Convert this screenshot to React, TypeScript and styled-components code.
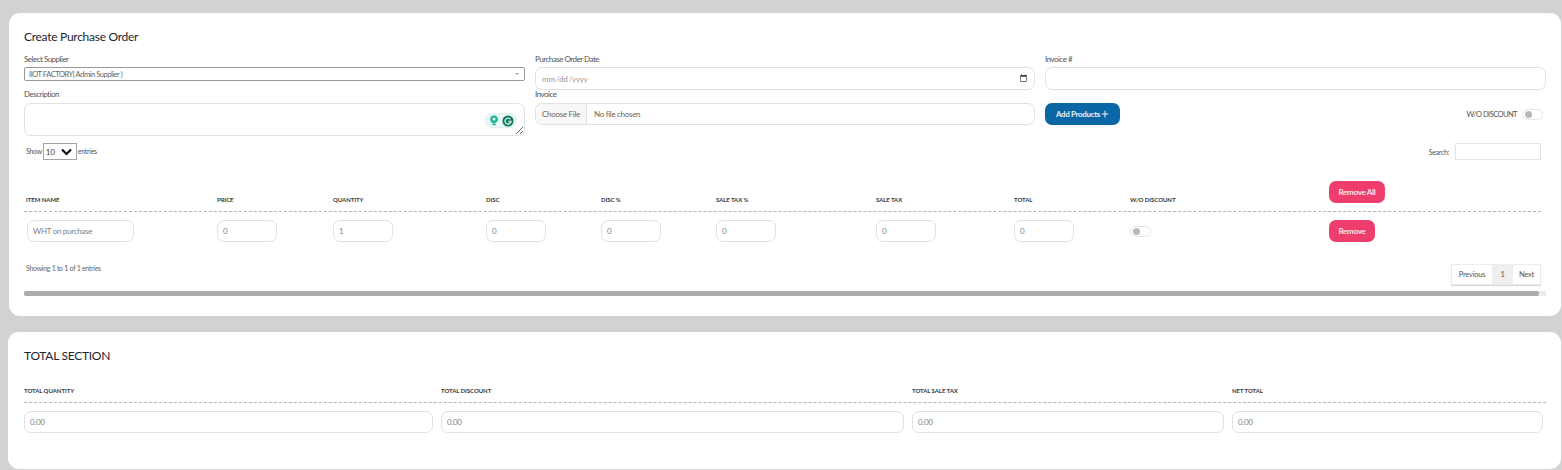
import React from "react";
import styled, { createGlobalStyle } from "styled-components";
import { Plus } from "lucide-react";

const GlobalStyle = createGlobalStyle`
  html, body {
    margin: 0;
    padding: 0;
    background: #d2d2d2;
    font-family: Lato, "Open Sans", sans-serif;
    color: #3a3a3a;
  }
  * { box-sizing: border-box; }
`;

const Page = styled.div`
  width: 1562px;
  height: 470px;
  padding-top: 13px;
  overflow: hidden;
`;

const Card = styled.section<{ $left: number }>`
  margin: 0 1px 0 ${(p) => p.$left}px;
  background: #fff;
  border-radius: 11px;
  padding: 16px 15px 20px ${(p) => 24 - p.$left}px;
  & + & {
    margin-top: 16px;
    padding-bottom: 35px;
  }
`;

const Title = styled.h4`
  margin: 0;
  font-size: 12px;
  line-height: 16px;
  font-weight: 400;
  letter-spacing: -0.28px;
  color: #1f2530;
`;

const FormGrid = styled.div`
  margin-top: 9px;
  display: grid;
  grid-template-columns: 501px 500px 501px;
  column-gap: 10px;
`;

const Field = styled.div`
  display: flex;
  flex-direction: column;
`;

const Label = styled.label<{ $height: number }>`
  height: ${(p) => p.$height}px;
  font-size: 8px;
  line-height: 10px;
  letter-spacing: -0.5px;
  color: #555;
`;

const FieldBody = styled.div<{ $height: number }>`
  height: ${(p) => p.$height}px;
  display: flex;
  align-items: flex-start;
  justify-content: space-between;
  position: relative;
`;

const SupplierSelect = styled.select`
  width: 100%;
  height: 14px;
  padding: 0 0 0 4px;
  border: 1px solid #999;
  border-radius: 2px;
  background: #fff;
  font-family: inherit;
  font-size: 7.5px;
  letter-spacing: -0.45px;
  color: #666;
  appearance: none;
  outline: none;
`;

const SelectCaret = styled.span`
  position: absolute;
  right: 6px;
  top: 6px;
  border-left: 2px solid transparent;
  border-right: 2px solid transparent;
  border-top: 2px solid #aaa;
`;

const TextInput = styled.input`
  display: block;
  width: 100%;
  height: 23px;
  padding: 0 5px;
  border: 1px solid #e2e2e2;
  border-radius: 7px;
  background: #fff;
  font-family: inherit;
  font-size: 8px;
  letter-spacing: -0.3px;
  color: #808080;
  outline: none;

  &::-webkit-calendar-picker-indicator {
    width: 9px;
    height: 9px;
    padding: 0;
    margin: 0 1px 0 0;
    opacity: 0.75;
  }
  &::-webkit-datetime-edit {
    padding: 0;
    color: #999;
    letter-spacing: -0.2px;
  }
  &::-webkit-datetime-edit-text {
    padding: 0;
    letter-spacing: -1.3px;
  }
`;

const DescriptionArea = styled.textarea`
  display: block;
  width: 100%;
  height: 33px;
  border: 1px solid #e2e2e2;
  border-radius: 7px;
  background: #fff;
  outline: none;
`;

const GrammarlyPill = styled.div`
  position: absolute;
  right: 8px;
  top: 10px;
  display: flex;
  align-items: center;
  gap: 3px;
  height: 15px;
  padding: 0 2px 0 3px;
  border-radius: 8px;
  background: #eaf7f4;
  border: 1px solid #dcefeb;
`;

const FileInput = styled.input`
  display: block;
  width: 100%;
  height: 22px;
  border: 1px solid #e2e2e2;
  border-radius: 7px;
  background: #fff;
  font-family: inherit;
  font-size: 8px;
  line-height: 20px;
  letter-spacing: -0.3px;
  color: #666;
  overflow: hidden;

  &::file-selector-button {
    width: 51px;
    height: 22px;
    margin: -1px 7px 0 0;
    padding: 0;
    border: none;
    border-right: 1px solid #e2e2e2;
    background: #f8f8f8;
    font-family: inherit;
    font-size: 8px;
    letter-spacing: -0.3px;
    color: #666;
  }
`;

const AddButton = styled.button`
  display: flex;
  align-items: center;
  justify-content: center;
  gap: 0;
  width: 75px;
  height: 22px;
  padding: 0 0 0 1px;
  border: none;
  border-radius: 7px;
  background: #0b66a6;
  color: #e8f2f8;
  font-family: inherit;
  font-size: 8px;
  font-weight: 700;
  letter-spacing: -0.35px;
`;

const DiscountSwitch = styled.div`
  display: flex;
  align-items: center;
  gap: 5px;
  height: 22px;
  padding-right: 3px;
  font-size: 7.5px;
  letter-spacing: -0.55px;
  color: #555;
`;

const Toggle = styled.span`
  display: flex;
  align-items: center;
  width: 21px;
  height: 11px;
  padding-left: 2px;
  border: 1px solid #e6e6e6;
  border-radius: 6px;
  background: #fff;
  &::before {
    content: "";
    width: 7px;
    height: 7px;
    border-radius: 50%;
    background: #b8b8b8;
  }
`;

const TableTop = styled.div`
  margin: 7px 5px 0 0;
  height: 17px;
  display: flex;
  align-items: center;
  justify-content: space-between;
  font-size: 7px;
  letter-spacing: -0.3px;
  color: #555;
`;

const LengthControl = styled.div`
  display: flex;
  align-items: center;
  margin-left: 2px;
  gap: 1px;
  position: relative;
  top: -1px;
`;

const LengthSelect = styled.div`
  width: 34px;
  height: 17px;
  margin-top: 2px;
  display: flex;
  align-items: center;
  justify-content: space-between;
  padding: 0 4px 0 2px;
  border: 1px solid #a4a4a4;
  font-size: 8px;
  color: #444;
`;

const SearchControl = styled.div`
  display: flex;
  align-items: center;
  gap: 6px;
`;

const SearchInput = styled.input`
  width: 86px;
  height: 17px;
  border: 1px solid #e4e4e4;
  outline: none;
`;

const tableColumns = "191px 116px 153px 115px 115px 160px 138px 116px 199px 1fr";

const HeadRow = styled.div`
  margin-right: 5px;
  height: 52px;
  padding-left: 2px;
  display: grid;
  grid-template-columns: ${tableColumns};
  align-items: end;
  border-bottom: 1px dashed #b4b4b4;
`;

const HeadCell = styled.div`
  padding-bottom: 6px;
  font-size: 6px;
  line-height: 10px;
  font-weight: 700;
  letter-spacing: -0.05px;
  text-transform: uppercase;
  color: #3a3a3a;
`;

const BodyRow = styled.div`
  margin-right: 5px;
  padding: 8px 0 0 2px;
  display: grid;
  grid-template-columns: ${tableColumns};
  align-items: center;
`;

const CellInput = styled(TextInput)<{ $wide?: boolean }>`
  width: ${(p) => (p.$wide ? "107px" : "60px")};
  height: 22px;
  margin-left: ${(p) => (p.$wide ? "1px" : "0")};
`;

const DangerButton = styled.button<{ $width: number }>`
  width: ${(p) => p.$width}px;
  height: 22px;
  padding: 0;
  border: none;
  border-radius: 7px;
  background: #ef3e6e;
  color: #fbe4ea;
  font-family: inherit;
  font-size: 8px;
  font-weight: 700;
  letter-spacing: -0.3px;
`;

const HeadButton = styled(DangerButton)`
  margin-bottom: 8px;
  display: block;
`;

const TableFoot = styled.div`
  margin: 22px 5px 0 2px;
  display: flex;
  align-items: flex-start;
  justify-content: space-between;
`;

const Info = styled.div`
  font-size: 7px;
  line-height: 9px;
  letter-spacing: -0.3px;
  color: #666;
`;

const Pager = styled.div`
  display: flex;
  height: 21px;
  border: 1px solid #ececec;
  box-shadow: 0 1px 1px #d8d8d8;
  font-size: 7.5px;
  letter-spacing: -0.2px;
  color: #555;
`;

const PagerItem = styled.span<{ $active?: boolean; $width: number }>`
  width: ${(p) => p.$width}px;
  display: flex;
  align-items: center;
  justify-content: center;
  background: ${(p) => (p.$active ? "#efefef" : "#fff")};
`;

const ScrollTrack = styled.div`
  margin-top: 6px;
  height: 5px;
  background: #ededed;
`;

const ScrollThumb = styled.div`
  width: 1515px;
  height: 5px;
  border-radius: 2px;
  background: #acacac;
`;

const totalColumns = "417px 471px 320px 1fr";

const TotalHead = styled.div`
  margin-top: 20px;
  height: 19px;
  display: grid;
  grid-template-columns: ${totalColumns};
  border-bottom: 1px dashed #b4b4b4;
  align-items: end;
`;

const TotalBody = styled.div`
  padding: 8px 0 1px;
  display: grid;
  grid-template-columns: ${totalColumns};
`;

const TotalCell = styled.div`
  padding-right: 8px;
  &:last-child {
    padding-right: 3px;
  }
`;

const TotalInput = styled(TextInput)`
  height: 22px;
`;

const GrammarlyIcons = () => (
  <>
    <svg width="10" height="11" viewBox="0 0 10 11">
      <circle cx="5" cy="4.2" r="3.8" fill="#1fb39a" />
      <circle cx="5" cy="4.2" r="1.4" fill="#e9f6f3" />
      <rect x="3.2" y="8.4" width="3.6" height="1.8" rx="0.6" fill="#1fb39a" />
    </svg>
    <svg width="12" height="12" viewBox="0 0 12 12">
      <circle cx="6" cy="6" r="5.6" fill="#11795f" />
      <path d="M8.3 4.1A3 3 0 1 0 9 6.5H6.4" fill="none" stroke="#d9f1ea" strokeWidth="1.3" />
    </svg>
  </>
);

const columns = ["Item Name", "Price", "Quantity", "Disc", "Disc %", "Sale Tax %", "Sale Tax", "Total", "W/O Discount"];
const rowValues = ["0", "1", "0", "0", "0", "0", "0"];
const totals = ["Total Quantity", "Total Discount", "Total Sale Tax", "Net Total"];

export default function App() {
  return (
    <Page>
      <GlobalStyle />
      <Card $left={9}>
        <Title>Create Purchase Order</Title>
        <FormGrid>
          <Field>
            <Label $height={13}>Select Supplier</Label>
            <FieldBody $height={22}>
              <SupplierSelect defaultValue="iiot">
                <option value="iiot">IIOT FACTORY( Admin Supplier )</option>
              </SupplierSelect>
              <SelectCaret />
            </FieldBody>
          </Field>
          <Field>
            <Label $height={13}>Purchase Order Date</Label>
            <FieldBody $height={22}>
              <TextInput type="date" />
            </FieldBody>
          </Field>
          <Field>
            <Label $height={13}>Invoice #</Label>
            <FieldBody $height={22}>
              <TextInput type="text" />
            </FieldBody>
          </Field>
          <Field>
            <Label $height={14}>Description</Label>
            <FieldBody $height={33}>
              <DescriptionArea />
              <GrammarlyPill>
                <GrammarlyIcons />
              </GrammarlyPill>
            </FieldBody>
          </Field>
          <Field>
            <Label $height={14}>Invoice</Label>
            <FieldBody $height={33}>
              <FileInput type="file" />
            </FieldBody>
          </Field>
          <Field>
            <Label $height={14} />
            <FieldBody $height={33}>
              <AddButton>
                Add Products <Plus size={10} strokeWidth={2.5} />
              </AddButton>
              <DiscountSwitch>
                W/O DISCOUNT
                <Toggle />
              </DiscountSwitch>
            </FieldBody>
          </Field>
        </FormGrid>

        <TableTop>
          <LengthControl>
            Show
            <LengthSelect>
              10
              <svg width="11" height="8" viewBox="0 0 11 8">
                <path d="M1 1.5 5.5 6 10 1.5" fill="none" stroke="#111" strokeWidth="2.2" />
              </svg>
            </LengthSelect>
            entries
          </LengthControl>
          <SearchControl>
            Search:
            <SearchInput />
          </SearchControl>
        </TableTop>

        <HeadRow>
          {columns.map((name) => (
            <HeadCell key={name}>{name}</HeadCell>
          ))}
          <HeadButton $width={56}>Remove All</HeadButton>
        </HeadRow>
        <BodyRow>
          <CellInput $wide defaultValue="WHT on purchase" />
          {rowValues.map((value, i) => (
            <CellInput key={i} defaultValue={value} />
          ))}
          <Toggle />
          <DangerButton $width={46}>Remove</DangerButton>
        </BodyRow>

        <TableFoot>
          <Info>Showing 1 to 1 of 1 entries</Info>
          <Pager>
            <PagerItem $width={40}>Previous</PagerItem>
            <PagerItem $active $width={21}>1</PagerItem>
            <PagerItem $width={27}>Next</PagerItem>
          </Pager>
        </TableFoot>

        <ScrollTrack>
          <ScrollThumb />
        </ScrollTrack>
      </Card>

      <Card $left={8}>
        <Title>TOTAL SECTION</Title>
        <TotalHead>
          {totals.map((name) => (
            <HeadCell key={name}>{name}</HeadCell>
          ))}
        </TotalHead>
        <TotalBody>
          {totals.map((name) => (
            <TotalCell key={name}>
              <TotalInput defaultValue="0.00" />
            </TotalCell>
          ))}
        </TotalBody>
      </Card>
    </Page>
  );
}
